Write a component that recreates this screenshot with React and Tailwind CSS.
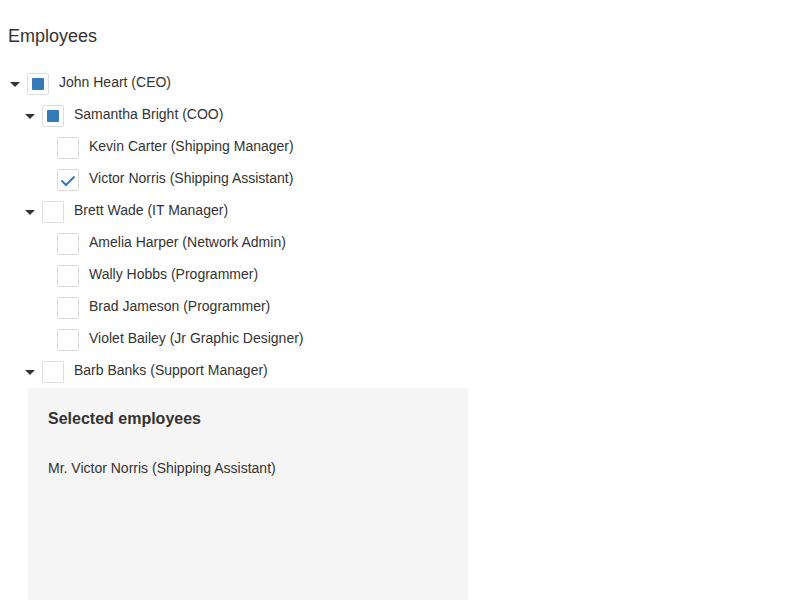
import React from 'react';

const tree = [
  {
    id: 1, text: 'John Heart (CEO)', state: 'mixed', expanded: true,
    items: [
      {
        id: 2, text: 'Samantha Bright (COO)', state: 'mixed', expanded: true,
        items: [
          { id: 3, text: 'Kevin Carter (Shipping Manager)', state: 'off' },
          { id: 4, text: 'Victor Norris (Shipping Assistant)', state: 'on' },
        ],
      },
      {
        id: 5, text: 'Brett Wade (IT Manager)', state: 'off', expanded: true,
        items: [
          { id: 6, text: 'Amelia Harper (Network Admin)', state: 'off' },
          { id: 7, text: 'Wally Hobbs (Programmer)', state: 'off' },
          { id: 8, text: 'Brad Jameson (Programmer)', state: 'off' },
          { id: 9, text: 'Violet Bailey (Jr Graphic Designer)', state: 'off' },
        ],
      },
      { id: 10, text: 'Barb Banks (Support Manager)', state: 'off', expanded: false, items: [{ id: 11 }] },
    ],
  },
];

function CheckBox({ state }) {
  return (
    <div className="w-[22px] h-[22px] shrink-0 border border-[#ddd] rounded-[2px] bg-white flex items-center justify-center">
      {state === 'mixed' && <div className="w-3 h-3 bg-[#337ab7] rounded-[1px]" />}
      {state === 'on' && (
        <svg width="20" height="20" viewBox="0 0 20 20">
          <path d="M3.5 10.5 L8 15 L16.5 6.5" fill="none" stroke="#337ab7" strokeWidth="2" />
        </svg>
      )}
    </div>
  );
}

function Node({ node }) {
  const hasKids = node.items && node.items.length > 0;
  return (
    <li>
      <div className="flex items-start h-8">
        <div className="w-[19px] shrink-0 pt-[13px]">
          {hasKids && (
            <svg width="10" height="5" viewBox="0 0 10 5" className="ml-[2px]">
              <path d="M0 0 L10 0 L5 5 Z" fill="#333" />
            </svg>
          )}
        </div>
        <div className="mt-1">
          <CheckBox state={node.state} />
        </div>
        <span className="ml-[10px] mt-[3px] leading-5 whitespace-nowrap">{node.text}</span>
      </div>
      {hasKids && node.expanded && (
        <ul className="pl-[15px]">
          {node.items.map(c => <Node key={c.id} node={c} />)}
        </ul>
      )}
    </li>
  );
}

export default function App() {
  return (
    <div className="min-h-[600px] bg-white text-[#333] text-[14px] font-['Liberation_Sans',Arial,sans-serif] overflow-hidden">
      <h2 className="px-2 pt-[25px] text-[18px] leading-[22px] font-normal">Employees</h2>
      <ul className="mt-[22px] pl-2">
        {tree.map(n => <Node key={n.id} node={n} />)}
      </ul>
      <div className="ml-[28px] w-[440px] h-[240px] -mt-px bg-[#f5f5f5] px-5 pt-[21px]">
        <h3 className="text-[16px] leading-5 font-bold">Selected employees</h3>
        <ul className="mt-[29px]">
          <li className="leading-5">Mr. Victor Norris (Shipping Assistant)</li>
        </ul>
      </div>
    </div>
  );
}
